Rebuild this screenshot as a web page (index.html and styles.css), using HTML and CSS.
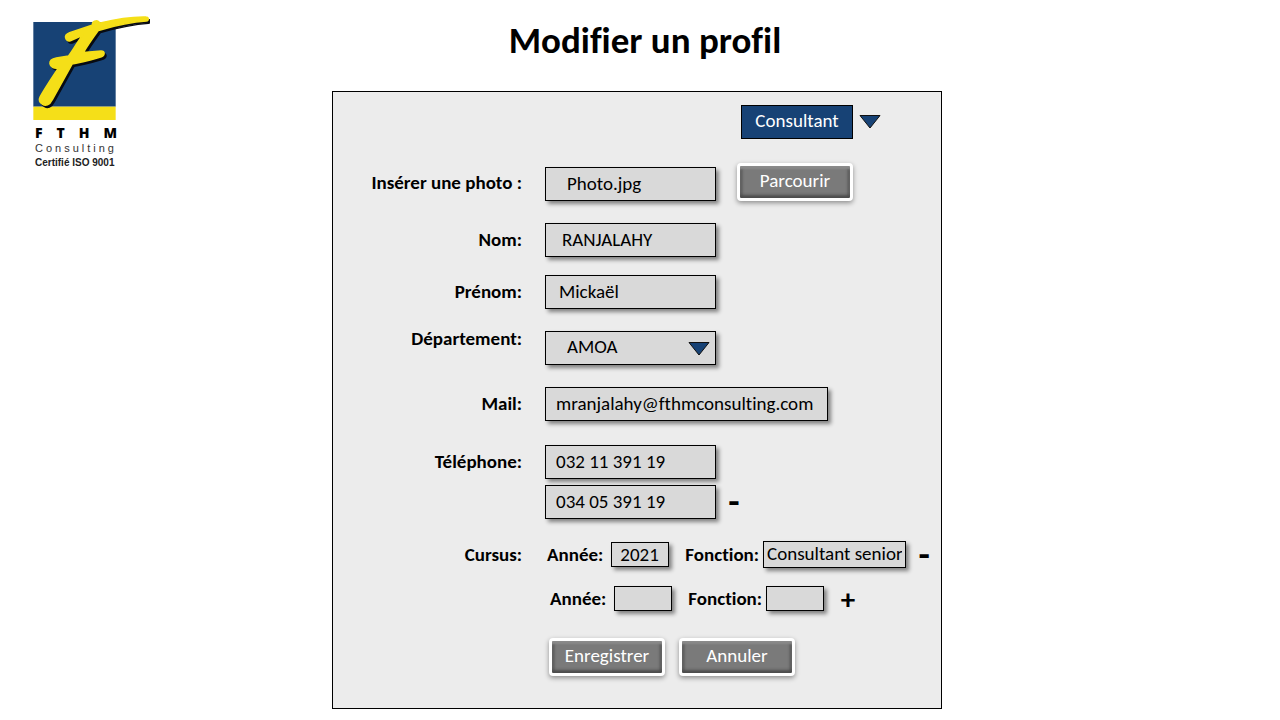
FILE: index.html
```html
<!DOCTYPE html>
<html lang="fr">
<head>
<meta charset="utf-8">
<title>Modifier un profil</title>
<link rel="stylesheet" href="styles.css">
</head>
<body>
<div class="page">
  <header class="brand">
    <svg class="brand-mark" viewBox="40 30 351 315" aria-hidden="true">
      <defs>
        <path id="brand-f" d="M138 98C136 90 142 86 150 83L219 60C216 50 232 43 238 52L242 54C286 43 336 35 379 36C387 36 388 47 380 48C328 51 281 63 236 76C220 98 204 120 191 143L244 138C256 138 256 151 245 155C215 165 185 171 157 177L97 285C90 301 77 303 69 298C59 293 57 284 62 275C78 246 98 217 117 188C105 192 92 186 91 176C90 166 98 161 110 159L147 153C162 131 175 110 189 91L152 107C145 109 139 105 138 98Z"/>
      </defs>
      <rect x="41" y="51" width="247" height="254" fill="#174275"/>
      <rect x="41" y="305" width="247" height="40" fill="#f5df18"/>
      <use href="#brand-f" x="6" y="7" fill="#080b12" stroke="#080b12" stroke-width="4"/>
      <use href="#brand-f" fill="#f5df18" stroke="#f5df18" stroke-width="5"/>
    </svg>
    <div class="brand-name"><span>F</span> <span>T</span> <span>H</span> <span>M</span></div>
    <div class="brand-sub">Consulting</div>
    <div class="brand-cert">Certifié ISO 9001</div>
  </header>

  <main class="content">
    <h1 class="title">Modifier un profil</h1>
    <form class="panel">
      <div class="role">
        <select class="role-select" aria-label="Rôle"><option>Consultant</option></select>
        <svg class="arrow" viewBox="0 0 22 14" aria-hidden="true"><path d="M1 .5H21L11 13Z"/></svg>
      </div>

      <div class="row row-photo">
        <label class="label" for="photo">Insérer une photo :</label>
        <input class="field indent-l" id="photo" type="text" value="Photo.jpg">
        <button class="button" type="button">Parcourir</button>
      </div>
      <div class="row">
        <label class="label" for="nom">Nom:</label>
        <input class="field indent-m" id="nom" type="text" value="RANJALAHY">
      </div>
      <div class="row row-close">
        <label class="label" for="prenom">Prénom:</label>
        <input class="field indent-s" id="prenom" type="text" value="Mickaël">
      </div>
      <div class="row">
        <label class="label label-top" for="departement">Département:</label>
        <div class="select-box">
          <select class="field indent-l" id="departement"><option>AMOA</option></select>
          <svg class="arrow arrow-inside" viewBox="0 0 22 14" aria-hidden="true"><path d="M1 .5H21L11 13Z"/></svg>
        </div>
      </div>
      <div class="row">
        <label class="label" for="mail">Mail:</label>
        <input class="field field-wide" id="mail" type="email" value="mranjalahy@fthmconsulting.com">
      </div>
      <div class="row row-apart">
        <label class="label" for="tel">Téléphone:</label>
        <input class="field" id="tel" type="tel" value="032 11 391 19">
      </div>
      <div class="row row-joined">
        <span class="label"></span>
        <input class="field" type="tel" value="034 05 391 19" aria-label="Téléphone 2">
        <button class="sign sign-minus sign-near" type="button" aria-label="Retirer le téléphone">-</button>
      </div>
      <div class="row">
        <span class="label">Cursus:</span>
        <div class="course">
          <label for="annee1">Année:</label>
          <input class="field field-small" id="annee1" type="text" value="2021">
          <label class="job" for="fonction1">Fonction:</label>
          <input class="field field-job" id="fonction1" type="text" value="Consultant senior">
          <button class="sign sign-minus" type="button" aria-label="Retirer le cursus">-</button>
        </div>
      </div>
      <div class="row row-close">
        <span class="label"></span>
        <div class="course course-new">
          <label for="annee2">Année:</label>
          <input class="field field-small" id="annee2" type="text">
          <label class="job" for="fonction2">Fonction:</label>
          <input class="field field-small" id="fonction2" type="text">
          <button class="sign" type="button" aria-label="Ajouter un cursus">+</button>
        </div>
      </div>
      <div class="actions">
        <button class="button" type="submit">Enregistrer</button>
        <button class="button" type="button">Annuler</button>
      </div>
    </form>
  </main>
</div>
</body>
</html>
```
FILE: styles.css
```css
* { box-sizing: border-box; }

body {
  margin: 0;
  background: #fff;
  color: #000;
  font: 19px/22px Carlito, Lato, sans-serif;
  font-variant-ligatures: none;
}

.page {
  display: grid;
  grid-template-columns: minmax(160px, 1fr) minmax(auto, 610px) 1fr;
  padding: 15px 6px 11px 0;
}

/* Logo */
.brand {
  width: 120px;
  margin-left: 33px;
  font-family: "Liberation Sans", sans-serif;
}
.brand-mark { display: block; width: 117px; height: 105px; }
.brand-name {
  display: flex;
  justify-content: space-between;
  width: 84px;
  padding: 6px 0 0 2px;
  font: 800 14px/14px "Open Sans", sans-serif;
}
.brand-sub {
  padding-left: 2px;
  font-size: 11px;
  line-height: 16px;
  letter-spacing: 3px;
  color: #333;
}
.brand-cert {
  padding-left: 2px;
  font-size: 10px;
  font-weight: bold;
  line-height: 14px;
  color: #222;
  white-space: nowrap;
}

.title {
  margin: 6px 0 30px;
  padding-left: 16px;
  font-size: 37px;
  line-height: 40px;
  text-align: center;
}

/* Form panel */
.panel {
  padding: 13px 0 32px;
  border: 1px solid #000;
  background: #ececec;
}
.role {
  display: flex;
  justify-content: flex-end;
  align-items: center;
  gap: 6px;
  padding-right: 60px;
}
.role-select {
  appearance: none;
  width: 112px;
  height: 34px;
  padding: 0 0 2px;
  border: 1px solid #000;
  border-radius: 0;
  background: #174275;
  color: #fff;
  font: inherit;
  text-align: center;
  text-align-last: center;
}
.arrow { width: 22px; height: 14px; flex: none; fill: #174275; stroke: #111; }

.row { display: flex; align-items: center; margin-top: 22px; }
.row-photo { align-items: flex-end; margin-top: 24px; }
.row-photo .label { line-height: 32px; padding-bottom: 2px; }
.row-close { margin-top: 18px; }
.row-apart { margin-top: 24px; }
.row-joined { margin-top: 6px; }

.label {
  flex: none;
  width: 189px;
  margin-right: 23px;
  text-align: right;
}
.label-top { align-self: flex-start; line-height: 16px; }
label, .label { font-weight: bold; }

.field {
  appearance: none;
  width: 171px;
  height: 34px;
  padding: 0 10px 2px;
  border: 1px solid #000;
  border-radius: 0;
  background: #d9d9d9;
  color: #000;
  font: inherit;
  font-variant-ligatures: none;
  box-shadow: 3px 3px 4px rgba(0, 0, 0, .45);
}
.indent-s { padding-left: 13px; }
.indent-m { padding-left: 16px; }
.indent-l { padding-left: 21px; }
.field-wide { width: 283px; }
.field-small { width: 58px; height: 25px; padding: 0 8px; }
.field-job { width: 143px; height: 27px; padding: 0 3px 2px; }

.select-box { position: relative; }
.select-box .field { display: block; }
.arrow-inside { position: absolute; right: 6px; top: 11px; }

.course { display: flex; align-items: center; padding-left: 2px; }
.course-new { padding-left: 5px; }
.course .field { margin-left: 8px; }
.course .job { margin-left: 16px; }
.course .job + .field { margin-left: 4px; }

.sign {
  width: 20px;
  height: 24px;
  margin-left: 14px;
  padding: 0;
  border: 0;
  background: none;
  color: #000;
  font-family: inherit;
  font-size: 29px;
  font-weight: bold;
  line-height: 24px;
}
.sign-minus { width: 16px; margin-left: 10px; font-size: 37px; }

.button {
  width: 116px;
  height: 38px;
  padding: 0 0 2px;
  border: 3px solid #fff;
  border-radius: 4px;
  background: #7a7a7a;
  color: #fff;
  font: inherit;
  box-shadow: 0 2px 5px rgba(0, 0, 0, .4),
    inset 0 4px 2px -1px #8a8a8a,
    inset 0 -4px 3px -1px #4c4c4c,
    inset 3px 0 2px #646464,
    inset -3px 0 2px #646464;
}
.row-photo .button { margin-left: 21px; }

.actions {
  display: flex;
  gap: 14px;
  margin-top: 27px;
  padding-left: 216px;
}
```
